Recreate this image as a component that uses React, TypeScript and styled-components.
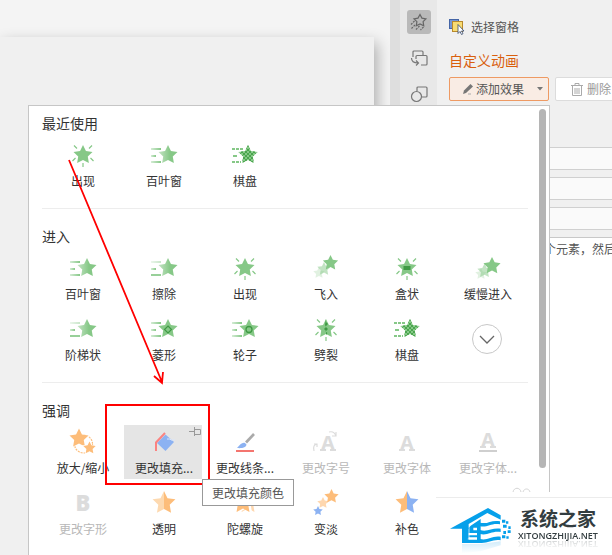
import React from 'react';
import styled, { createGlobalStyle } from 'styled-components';

const GlobalStyle = createGlobalStyle`
  *, *::before, *::after { box-sizing: border-box; }
  body {
    margin: 0;
    background: #f3f3f3;
    color: #333;
    font-family: "Noto Sans CJK SC", sans-serif;
    font-size: 12px;
    line-height: 18px;
  }
  button, input { font: inherit; color: inherit; }
  button { cursor: pointer; }
  svg { display: block; }
`;

const GREEN = '#86c887';
const DARK_GREEN = '#3f9a44';
const ORANGE = '#fdbd7a';
const BLUE = '#8cb2f2';
const GREY = '#dcdcdc';

/* ---------- layout ---------- */

const Page = styled.div`
  position: relative;
  display: flex;
  min-height: 100vh;
  overflow: hidden;
`;

const Canvas = styled.main`
  flex: 1;
  display: flex;
  padding: 37px 16px 0 0;
  overflow: hidden;
  background: #f4f4f4;
`;

const Slide = styled.div`
  flex: 1;
  background: #f0f0f0;
  box-shadow: 3px 6px 14px rgba(0, 0, 0, 0.3);
`;

const Splitter = styled.div`
  width: 10px;
  background: #dedede;
`;

const Rail = styled.nav`
  width: 37px;
  display: flex;
  flex-direction: column;
  align-items: center;
  gap: 12px;
  padding-top: 10px;
  background: #e8e8e8;
`;

const RailButton = styled.button<{ $active?: boolean }>`
  width: 24px;
  height: 24px;
  display: grid;
  place-items: center;
  padding: 0;
  border: 0;
  border-radius: 3px;
  background: ${(p) => (p.$active ? '#b9b9b9' : 'transparent')};
`;

const Pane = styled.aside`
  width: 175px;
  padding: 17px 0 0 12px;
  overflow: hidden;
  background: #f0f0f0;
`;

const SelectionButton = styled.button`
  height: 20px;
  display: flex;
  align-items: center;
  gap: 6px;
  padding: 0;
  border: 0;
  background: none;
  color: #555;
`;

const PaneTitle = styled.h2`
  margin: 12px 0 6px;
  color: #d95f0e;
  font-size: 14px;
  font-weight: 400;
  line-height: 22px;
`;

const ButtonRow = styled.div`
  display: flex;
  gap: 6px;
`;

const AddButton = styled.button`
  flex: none;
  width: 100px;
  height: 24px;
  display: flex;
  align-items: center;
  padding: 0 5px 0 12px;
  border: 1px solid #ee9a63;
  border-radius: 2px;
  background: #f9ece4;
  color: #555;
`;

const AddLabel = styled.span`
  flex: 1;
  margin-left: 2px;
  text-align: left;
`;

const DeleteButton = styled.button`
  flex: none;
  width: 76px;
  height: 24px;
  display: flex;
  align-items: center;
  gap: 4px;
  padding: 0 0 0 15px;
  border: 1px solid #dcdcdc;
  border-radius: 2px;
  background: #fff;
  color: #999;
`;

const Fields = styled.div`
  display: grid;
  gap: 7px;
  margin: 46px 0 7px;
`;

const Field = styled.input`
  width: 100%;
  height: 23px;
  border: 1px solid #d0d0d0;
  border-right: 0;
  background: #fafafa;
`;

const EffectList = styled.div`
  height: 100%;
  padding: 2px 0 0 94px;
  border: 1px solid #c8c8c8;
  border-right: 0;
  background: #fff;
  color: #555;
  white-space: nowrap;
`;

/* ---------- effect menu ---------- */

const Menu = styled.div`
  position: absolute;
  top: 105px;
  right: 62px;
  bottom: 0;
  left: 28px;
  display: flex;
  gap: 11px;
  padding: 0 3px 0 13px;
  overflow: hidden;
  border: 1px solid #c6c6c6;
  border-bottom: 0;
  background: #fff;
`;

const MenuBody = styled.div`
  flex: 1;
`;

const ScrollThumb = styled.div`
  width: 7px;
  height: 80%;
  margin-top: 3px;
  border-radius: 4px;
  background: #b5b5b5;
`;

const Section = styled.section`
  padding: 17px 0 16px;
  border-bottom: 1px solid #ededed;
  &:first-child { padding-top: 7px; }
  &:last-child { border-bottom: 0; }
`;

const SectionTitle = styled.h3`
  margin: 0 0 5px;
  font-size: 14px;
  font-weight: 400;
  line-height: 20px;
`;

const EffectGrid = styled.div`
  display: grid;
  grid-template-columns: repeat(6, 1fr);
  row-gap: 7px;
`;

const Slot = styled.div`
  position: relative;
  display: grid;
  place-items: center;
  height: 54px;
  padding: 0 2px 0 1px;
`;

const EffectButton = styled.button<{ $hovered?: boolean }>`
  position: relative;
  width: 100%;
  height: 54px;
  display: flex;
  flex-direction: column;
  align-items: center;
  gap: 3px;
  padding: 3px 0 2px 2px;
  border: 0;
  background: ${(p) => (p.$hovered ? '#e5e5e5' : 'none')};
  white-space: nowrap;
  &:disabled { color: #b8b8b8; }
`;

const EffectIcon = styled.svg`
  overflow: visible;
`;

const Pin = styled.span`
  position: absolute;
  top: 2px;
  right: 1px;
`;

const Tooltip = styled.div`
  position: absolute;
  z-index: 2;
  top: 54px;
  left: 79px;
  padding: 4px 9px 3px;
  border: 1px solid #999;
  background: #fff;
  color: #555;
  white-space: nowrap;
`;

const MoreButton = styled.button`
  width: 30px;
  height: 30px;
  display: grid;
  place-items: center;
  padding: 0;
  border: 1px solid #c8c8c8;
  border-radius: 50%;
  background: #fff;
`;

/* ---------- overlays ---------- */

const Frame = styled.div`
  position: absolute;
  top: 404px;
  left: 105px;
  width: 105px;
  height: 81px;
  border: 2px solid #f00;
`;

const Arrow = styled.svg`
  position: absolute;
  top: 155px;
  left: 60px;
`;

const Watermark = styled.div`
  position: absolute;
  top: 487px;
  right: 0;
  bottom: 0;
  left: 436px;
`;

const Specks = styled.svg`
  margin-left: 76px;
`;

const WatermarkBody = styled.div`
  height: 100%;
  padding-top: 5px;
  background: #fff;
`;

const Brand = styled.div`
  display: flex;
  align-items: flex-start;
  gap: 6px;
  padding: 9px 0 0 14px;
  border-top: 1px solid #ececec;
`;

const BrandText = styled.div`
  display: flex;
  flex-direction: column;
  align-items: center;
`;

const BrandName = styled.strong`
  color: #333d40;
  font-size: 19px;
  line-height: 22px;
`;

const BrandUrl = styled.span`
  color: #333d40;
  font-family: "Open Sans", sans-serif;
  font-size: 9px;
  font-weight: 600;
  line-height: 14px;
  -webkit-box-reflect: below -6px linear-gradient(transparent 10%, rgba(0, 0, 0, 0.3));
`;

/* ---------- drawings ---------- */

const starPoints = (cx: number, cy: number, r: number) =>
  Array.from({ length: 10 }, (_, i) => {
    const radius = i % 2 ? r * 0.5 : r;
    const a = (Math.PI / 5) * i - Math.PI / 2;
    return `${(cx + radius * Math.cos(a)).toFixed(2)},${(cy + radius * Math.sin(a)).toFixed(2)}`;
  }).join(' ');

type StarProps = { x?: number; y?: number; r?: number; fill?: string; opacity?: number };
const Star = ({ x = 14, y = 14, r = 10, fill = GREEN, opacity = 1 }: StarProps) => (
  <polygon points={starPoints(x, y, r)} fill={fill} opacity={opacity} />
);

const Rays = () => (
  <path d="M5 4.500l3 3M23 4.500l-3 3M3.500 20l3-3M24.500 20l-3-3M14 22v4" stroke={GREEN} strokeWidth="1.200" fill="none" />
);

const Lines = ({ faded }: { faded?: boolean }) => (
  <g>
    <rect x="1" y="7" width="10" height="2" fill="url(#trail)" opacity={faded ? 0.45 : 1} />
    <rect x="1" y="14" width="5" height="2" fill="url(#trail)" />
    <rect x="1" y="20" width="10" height="2" fill={faded ? GREEN : 'url(#trail)'} opacity={faded ? 0.85 : 1} />
  </g>
);

const SlabA = () => (
  <g fill={GREY}>
    <text x="14" y="22" textAnchor="middle" fontSize="20" fontWeight="700" fontFamily="Noto Sans">A</text>
    <path d="M6 21h6v2H6zM16 21h6v2h-6z" />
  </g>
);

const drawings: Record<string, React.ReactNode> = {
  appear: <><Rays /><Star /></>,
  blinds: <><Lines /><Star x={18} fill="url(#starFade)" /></>,
  wipe: <><Lines faded /><Star x={18} fill="url(#starFade)" /></>,
  checker: (
    <>
      <path d="M1 8h11M1 21h9" stroke={GREEN} strokeWidth="2" strokeDasharray="3 1" />
      <path d="M2 15h4" stroke={GREEN} strokeWidth="2" />
      <Star x={17} /><Star x={17} fill="url(#check)" />
    </>
  ),
  diamond: <><Lines /><Star x={18} /><path d="M18 11l3.500 3.500L18 18l-3.500-3.500z" fill="none" stroke={DARK_GREEN} strokeWidth="1.200" /></>,
  wheel: <><Lines /><Star x={18} /><circle cx="18" cy="14.500" r="3" fill="none" stroke={DARK_GREEN} strokeWidth="1.300" /></>,
  flyIn: <><Star x={7} y={19} r={6} opacity={0.25} /><Star x={12} y={15} r={7} opacity={0.5} /><Star x={18.5} y={9} r={8} /></>,
  box: <><Rays /><Star /><rect x="10.500" y="12" width="7" height="4" fill={DARK_GREEN} /></>,
  slowIn: <><Star x={7} y={20} r={6} opacity={0.25} /><Star x={10.5} y={17} r={7.500} opacity={0.5} /><Star x={18} y={12} r={9} /></>,
  split: <><Rays /><Star /><path d="M14 4v3l2 2-2.500 2.500L16 14l-2.500 2.500L15.500 18 14 20v-4l-2-2 2-2-1-2z" fill={DARK_GREEN} /></>,
  grow: (
    <>
      <circle cx="14.500" cy="16" r="9" fill="none" stroke={ORANGE} strokeWidth="1.200" strokeDasharray="2 1" />
      <Star x={10} y={10.500} r={11} fill="#fff" />
      <Star x={10} y={10.500} r={10} fill={ORANGE} />
      <Star x={20.500} y={20} r={8} fill="#fff" />
      <Star x={20.500} y={20} r={6.500} fill={ORANGE} />
    </>
  ),
  fill: (
    <>
      <path d="M15.500 6.500l8.500 7.500-8.500 9-8.500-8z" fill={BLUE} />
      <path d="M17 11h3l1 1h4" fill="none" stroke="#d9e5fb" strokeWidth="1" />
      <path d="M6 23v-8.500l9-9.500" fill="none" stroke="#fb8381" strokeWidth="2" />
    </>
  ),
  line: (
    <>
      <path d="M23 6l-8 8.500" stroke="#aaa" strokeWidth="2.600" />
      <path d="M14 15c-3-1-5 2-8 5 4 .5 9 0 9.500-3.500z" fill={BLUE} />
      <path d="M5 23h18" stroke="#f4756f" strokeWidth="2" />
    </>
  ),
  fontSize: (
    <>
      <g transform="translate(2 0)"><SlabA /></g>
      <path d="M2 23c-1-5 0-6 3-7M2 16h3v3M17 4c4-1 6 1 7 4M20 8h4V4" fill="none" stroke={GREY} strokeWidth="1.200" />
    </>
  ),
  font: <SlabA />,
  fontColor: <><g transform="translate(0 -3)"><SlabA /></g><path d="M5 23h18" stroke="#cfcfcf" strokeWidth="2" /></>,
  fontStyle: (
    <text x="14" y="22" textAnchor="middle" fontSize="22" fontWeight="800" fontFamily="Open Sans" fill={GREY}>B</text>
  ),
  transparent: <Star r={12} fill="url(#halfFade)" />,
  spin: <><Star x={17} y={14} r={11} fill={ORANGE} opacity={0.6} /><Star x={14} r={12} fill="#fff" /><Star x={12} r={11} fill={ORANGE} /></>,
  fade: <><Star x={6} y={22} r={5} fill={BLUE} /><Star x={11} y={14} r={6} fill={ORANGE} opacity={0.6} /><Star x={19.500} y={7.500} r={7.500} fill={ORANGE} /></>,
  complement: <Star r={12} fill="url(#halfBlue)" />,
};

const SharedDefs = () => (
  <svg width="0" height="0" aria-hidden="true">
    <defs>
      <linearGradient id="trail">
        <stop offset="0" stopColor={GREEN} stopOpacity="0.35" />
        <stop offset="1" stopColor={GREEN} />
      </linearGradient>
      <linearGradient id="starFade">
        <stop offset="0" stopColor="#c3e3c3" />
        <stop offset="0.600" stopColor={GREEN} />
      </linearGradient>
      <linearGradient id="halfFade">
        <stop offset="0.500" stopColor="#fdd9b0" />
        <stop offset="0.500" stopColor={ORANGE} />
      </linearGradient>
      <linearGradient id="halfBlue">
        <stop offset="0.500" stopColor={ORANGE} />
        <stop offset="0.500" stopColor={BLUE} />
      </linearGradient>
      <pattern id="check" width="4" height="4" patternUnits="userSpaceOnUse">
        <path d="M0 0h2v2H0zM2 2h2v2H2z" fill="#4aa54e" />
      </pattern>
    </defs>
  </svg>
);

const HouseLogo = () => (
  <svg width="62" height="48" viewBox="60 80 186 144" aria-hidden="true">
    <defs>
      <linearGradient id="logoShade" x1="0" y1="0" x2="0" y2="1">
        <stop offset="0" stopColor="#1a9fe8" stopOpacity="0.2" />
        <stop offset="1" stopColor="#1a9fe8" stopOpacity="0" />
      </linearGradient>
    </defs>
    <g fill="#06a0ea">
      <path d="M60 145L174 83l38 22v13l-40-20-56 33v14z" />
      <path d="M96 143l20-1v33h-3v13H96z" />
      <path d="M122 136l30-20v72H96v-11h22v-36z" />
      <path d="M150 127c24 6 34-10 60-4v9c-26-5-36 10-60 6z" />
      <path d="M150 149c24 7 36-8 62-4v10c-26-5-38 12-62 6z" />
      <path d="M150 176c24 6 34-11 62-7v11c-26-4-36 10-62 8z" />
      <path d="M216 118h10v9h-10zM228 123h7v7h-7zM219 133h11v9h-11zM235 138h7v8h-7zM220 152h8v9h-8zM233 150h9v8h-9zM216 165h10v9h-10zM229 168h7v7h-7z" />
    </g>
    <path d="M130 142h11v8h-11zM116 158h25v7h-25zM116 171h25v7h-25z" fill="#fff" />
    <path d="M96 191h56l60-8v12l-60 18-56 6z" fill="url(#logoShade)" />
  </svg>
);

const StarPaneIcon = () => (
  <svg width="18" height="18" viewBox="0 0 18 18" fill="none" stroke="#666" strokeWidth="1.200" aria-hidden="true">
    <path d="M10 1.500l1.900 3.600 4 .7-2.800 2.900.6 4-3.700-1.700-3.700 1.700.6-4L4 5.800l4-.7z" />
    <path d="M4.500 8L1 11.500M5 12l-4 4M9.500 13l-4 4M13.500 14l-3 3" strokeDasharray="2 1" />
  </svg>
);

const TransitionIcon = () => (
  <svg width="18" height="18" viewBox="0 0 18 18" fill="none" stroke="#777" strokeWidth="1.200" aria-hidden="true">
    <path d="M3 8V3a1 1 0 011-1h8a1 1 0 011 1v3" />
    <path d="M6 10V7.500a1 1 0 011-1h9a1 1 0 011 1V15a1 1 0 01-1 1h-5" />
    <path d="M1.500 9c0 3.500 2 5 6.500 5M6 11.500L8.500 14 6 16.500" />
  </svg>
);

const ShapesIcon = () => (
  <svg width="18" height="18" viewBox="0 0 18 18" fill="none" stroke="#777" strokeWidth="1.200" aria-hidden="true">
    <circle cx="6.500" cy="11.500" r="5" />
    <path d="M7 6V3a1 1 0 011-1h8a1 1 0 011 1v8a1 1 0 01-1 1h-4" />
  </svg>
);

const SelectionIcon = () => (
  <svg width="16" height="16" viewBox="0 0 16 16" aria-hidden="true">
    <rect x="0.500" y="0.500" width="9" height="9" fill="#7897d2" stroke="#4465a6" />
    <rect x="3.500" y="2.500" width="10" height="10" fill="#f8dc72" stroke="#b8892c" />
    <path d="M9 5.500v9l2-2 1.500 3 1.500-.8-1.500-2.700H15z" fill="#fff" stroke="#34466b" strokeWidth="0.800" />
  </svg>
);

const PencilIcon = () => (
  <svg width="12" height="12" viewBox="0 0 12 12" aria-hidden="true">
    <path d="M8.500 1l2.500 2.500L4 10l-3 1 1-3.500z" fill="#777" />
    <path d="M6 11h3" stroke="#aaa" />
  </svg>
);

const TrashIcon = () => (
  <svg width="12" height="13" viewBox="0 0 12 13" fill="none" stroke="#aaa" aria-hidden="true">
    <path d="M0 2.500h12M4 2V.500h4V2M1.500 3v9.500h9V3M4 5v6M6 5v6M8 5v6" />
  </svg>
);

/* ---------- data ---------- */

type Effect = { icon: string; label: string; disabled?: boolean; tip?: string };

const sections: { title: string; more?: boolean; effects: Effect[] }[] = [
  {
    title: '最近使用',
    effects: [
      { icon: 'appear', label: '出现' },
      { icon: 'blinds', label: '百叶窗' },
      { icon: 'checker', label: '棋盘' },
    ],
  },
  {
    title: '进入',
    more: true,
    effects: [
      { icon: 'blinds', label: '百叶窗' },
      { icon: 'wipe', label: '擦除' },
      { icon: 'appear', label: '出现' },
      { icon: 'flyIn', label: '飞入' },
      { icon: 'box', label: '盒状' },
      { icon: 'slowIn', label: '缓慢进入' },
      { icon: 'wipe', label: '阶梯状' },
      { icon: 'diamond', label: '菱形' },
      { icon: 'wheel', label: '轮子' },
      { icon: 'split', label: '劈裂' },
      { icon: 'checker', label: '棋盘' },
    ],
  },
  {
    title: '强调',
    effects: [
      { icon: 'grow', label: '放大/缩小' },
      { icon: 'fill', label: '更改填充...', tip: '更改填充颜色' },
      { icon: 'line', label: '更改线条...' },
      { icon: 'fontSize', label: '更改字号', disabled: true },
      { icon: 'font', label: '更改字体', disabled: true },
      { icon: 'fontColor', label: '更改字体...', disabled: true },
      { icon: 'fontStyle', label: '更改字形', disabled: true },
      { icon: 'transparent', label: '透明' },
      { icon: 'spin', label: '陀螺旋' },
      { icon: 'fade', label: '变淡' },
      { icon: 'complement', label: '补色' },
    ],
  },
];

const EffectItem = ({ effect }: { effect: Effect }) => (
  <Slot>
    <EffectButton $hovered={!!effect.tip} disabled={effect.disabled}>
      <EffectIcon width="28" height="28" viewBox="0 0 28 28" aria-hidden="true">{drawings[effect.icon]}</EffectIcon>
      <span>{effect.label}</span>
      {effect.tip && (
        <Pin>
          <svg width="12" height="10" viewBox="0 0 12 10" fill="none" stroke="#999" aria-hidden="true">
            <path d="M0 4.500h5M5.500 0v9M6 2.500h5.500v5H6" />
          </svg>
        </Pin>
      )}
    </EffectButton>
    {effect.tip && <Tooltip role="tooltip">{effect.tip}</Tooltip>}
  </Slot>
);

export default function App() {
  return (
    <>
      <GlobalStyle />
      <SharedDefs />
      <Page>
        <Canvas><Slide /></Canvas>
        <Splitter />
        <Rail>
          <RailButton $active aria-label="自定义动画"><StarPaneIcon /></RailButton>
          <RailButton aria-label="幻灯片切换"><TransitionIcon /></RailButton>
          <RailButton aria-label="形状"><ShapesIcon /></RailButton>
        </Rail>
        <Pane>
          <SelectionButton><SelectionIcon />选择窗格</SelectionButton>
          <PaneTitle>自定义动画</PaneTitle>
          <ButtonRow>
            <AddButton>
              <PencilIcon />
              <AddLabel>添加效果</AddLabel>
              <svg width="6" height="4" viewBox="0 0 6 4" aria-hidden="true"><path d="M0 0h6L3 3.500z" fill="#777" /></svg>
            </AddButton>
            <DeleteButton><TrashIcon />删除</DeleteButton>
          </ButtonRow>
          <Fields>
            <Field aria-label="开始" />
            <Field aria-label="属性" />
            <Field aria-label="速度" />
          </Fields>
          <EffectList>个元素，然后</EffectList>
        </Pane>

        <Menu>
          <MenuBody>
            {sections.map((section) => (
              <Section key={section.title}>
                <SectionTitle>{section.title}</SectionTitle>
                <EffectGrid>
                  {section.effects.map((effect) => (
                    <EffectItem key={effect.label} effect={effect} />
                  ))}
                  {section.more && (
                    <Slot>
                      <MoreButton aria-label="更多">
                        <svg width="16" height="9" viewBox="0 0 16 9" fill="none" stroke="#666" strokeWidth="1.300" aria-hidden="true">
                          <path d="M1 1l7 7 7-7" />
                        </svg>
                      </MoreButton>
                    </Slot>
                  )}
                </EffectGrid>
              </Section>
            ))}
          </MenuBody>
          <ScrollThumb />
        </Menu>

        <Frame />
        <Arrow width="110" height="235" viewBox="0 0 110 235" fill="none" stroke="#f00" strokeWidth="1.800" aria-hidden="true">
          <path d="M9 5l93 222M94 221l8 7 1-11" />
        </Arrow>

        <Watermark>
          <Specks width="20" height="5" viewBox="0 0 20 5" fill="none" stroke="#d5d5d5" aria-hidden="true">
            <path d="M1 5c1-5 7-5 8 0M11 5c1-4 6-4 7 0" />
          </Specks>
          <WatermarkBody>
            <Brand>
              <HouseLogo />
              <BrandText>
                <BrandName>系统之家</BrandName>
                <BrandUrl>XITONGZHIJIA.NET</BrandUrl>
              </BrandText>
            </Brand>
          </WatermarkBody>
        </Watermark>
      </Page>
    </>
  );
}
